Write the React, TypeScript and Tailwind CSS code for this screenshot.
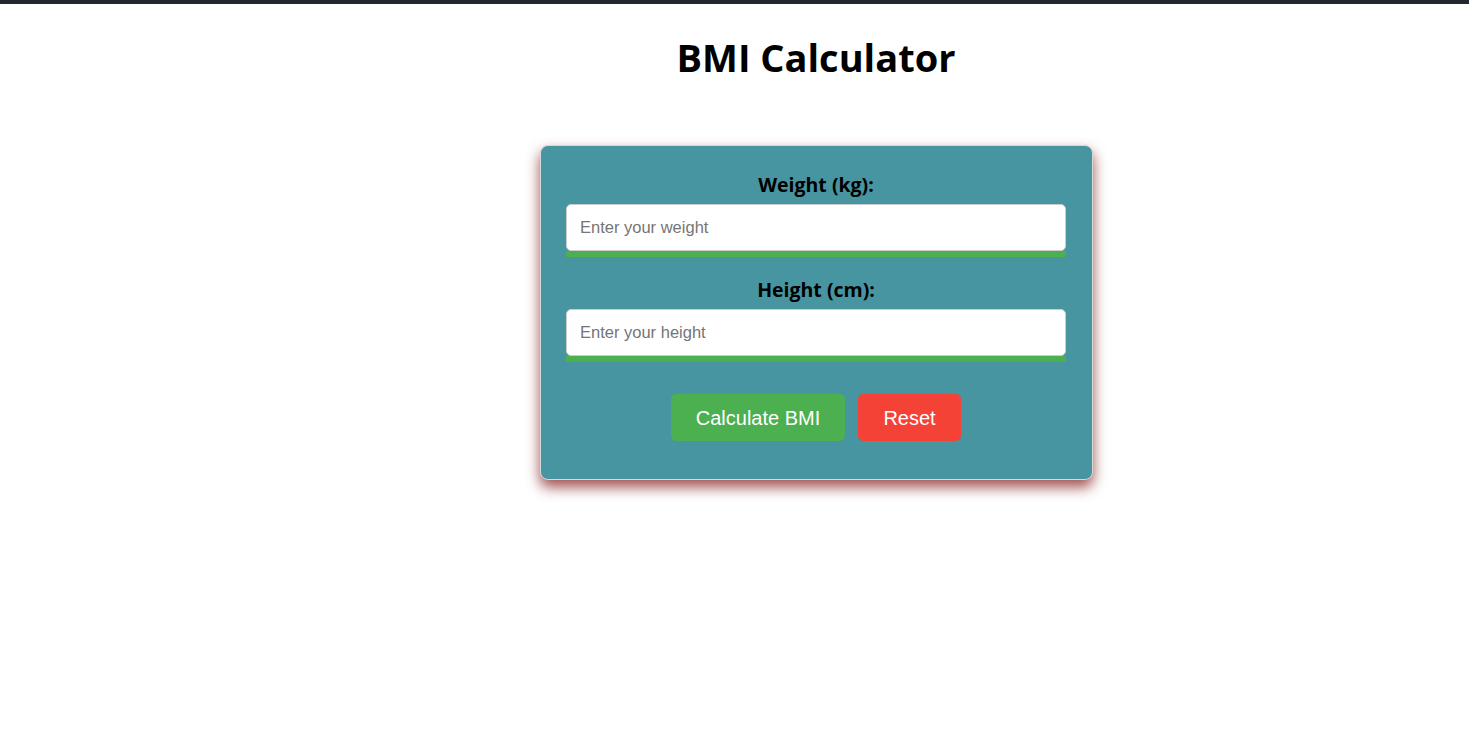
import { useState } from 'react'

const Field = ({ label, placeholder, value, onChange }: { label: string; placeholder: string; value: string; onChange: (v: string) => void }) => (
  <div className="flex flex-col items-center">
    <label className="text-[19.5px] font-bold text-black leading-[26px] mb-[6px] font-['Open_Sans',sans-serif]">{label}</label>
    <div className="w-[500px] border-b-[6px] border-[#4caf50]">
      <input
        type="number"
        value={value}
        onChange={(e) => onChange(e.target.value)}
        placeholder={placeholder}
        className="w-full h-[47px] bg-white rounded-[5px] border border-[#cccccc] px-[13px] text-[16.5px] text-black placeholder:text-[#757575] outline-none font-['Liberation_Sans',Arial,sans-serif]"
      />
    </div>
  </div>
)

const App = () => {
  const [weight, setWeight] = useState('')
  const [height, setHeight] = useState('')

  return (
    <div className="min-h-screen bg-white">
      <div className="h-[4px] bg-[#23272e]" />
      <div className="flex flex-col items-center pl-[163px]">
        <h1 className="mt-[28px] text-[38px] font-bold text-black leading-[50px] font-['Open_Sans',sans-serif]">BMI Calculator</h1>
        <div className="mt-[63px] w-[553px] h-[335px] bg-[#4795a0] border border-[#d8d8d8] rounded-[8px] shadow-[0_7px_14px_rgba(120,0,0,0.7)] flex flex-col gap-[20px] pt-[26px]">
          <Field label="Weight (kg):" placeholder="Enter your weight" value={weight} onChange={setWeight} />
          <Field label="Height (cm):" placeholder="Enter your height" value={height} onChange={setHeight} />
          <div className="flex justify-center gap-[13px] mt-[12px] font-['Liberation_Sans',Arial,sans-serif]">
            <button className="w-[174px] h-[47px] bg-[#4caf50] text-white text-[20px] rounded-[5px]">Calculate BMI</button>
            <button
              onClick={() => { setWeight(''); setHeight('') }}
              className="w-[103px] h-[47px] bg-[#f44336] text-white text-[20px] rounded-[5px]"
            >
              Reset
            </button>
          </div>
        </div>
      </div>
    </div>
  )
}

export default App
